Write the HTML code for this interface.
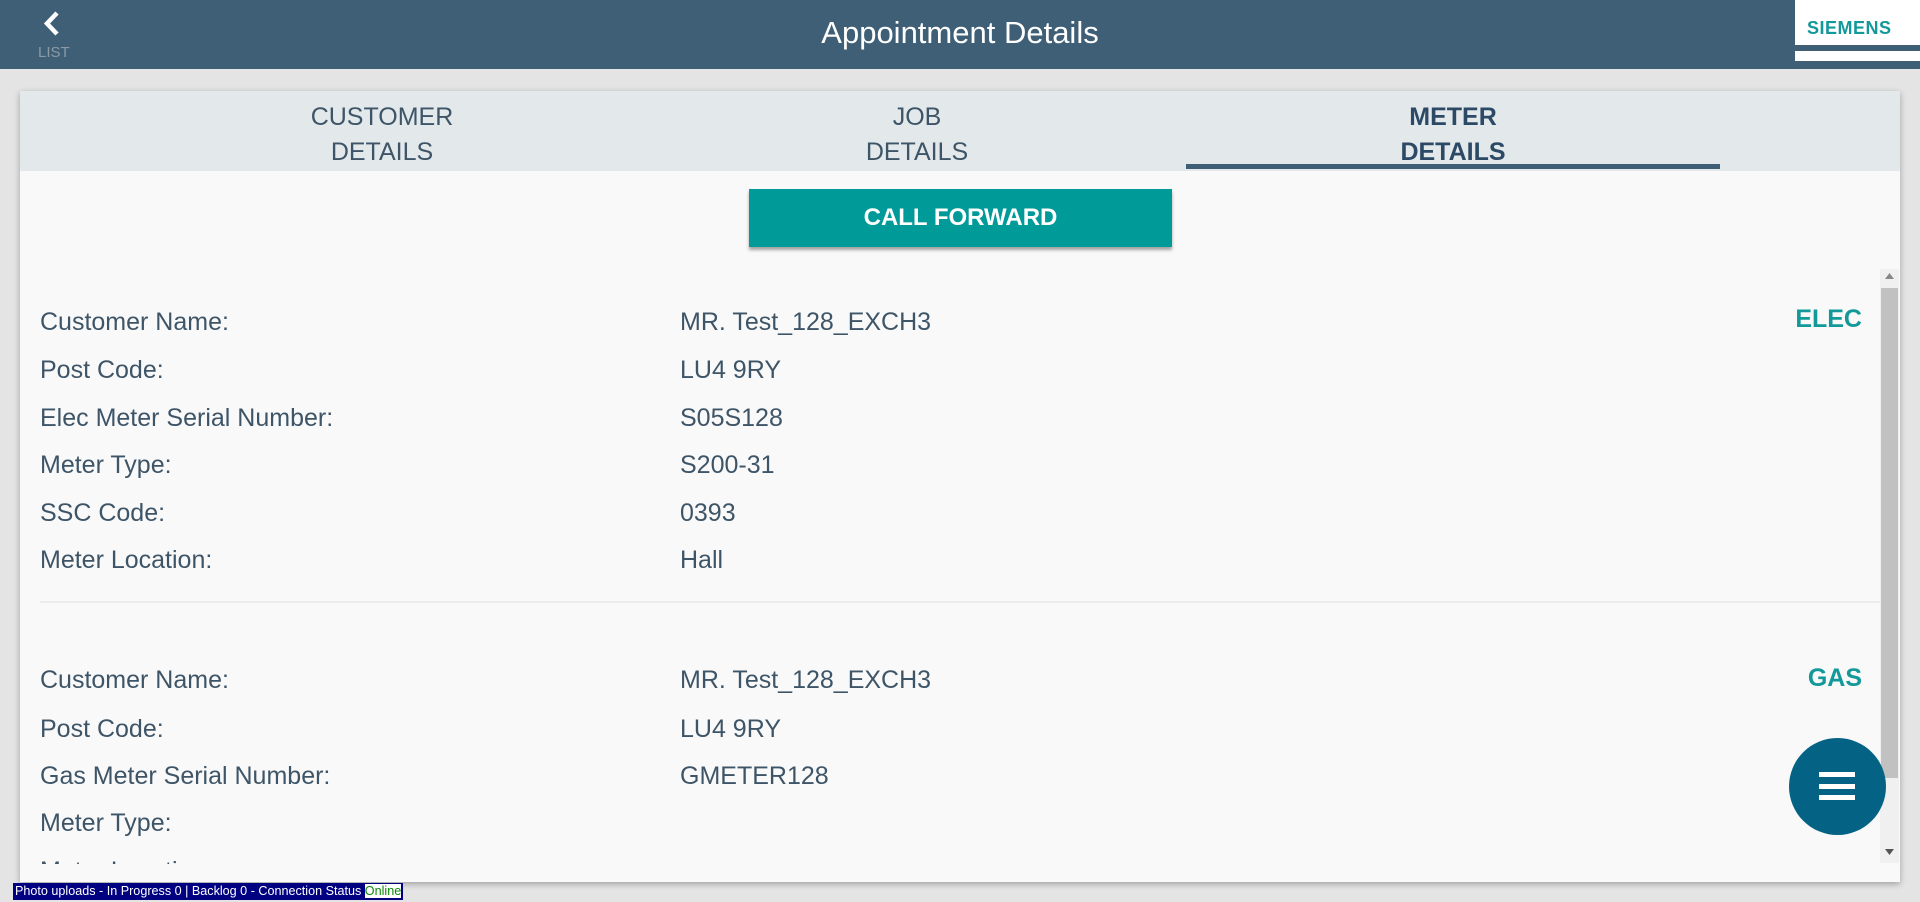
<!DOCTYPE html>
<html><head><meta charset="utf-8"><style>
*{margin:0;padding:0;box-sizing:border-box}
body{width:1920px;height:902px;overflow:hidden;background:#e4e4e4;font-family:"Liberation Sans",Arial,sans-serif;position:relative}
.hdr{position:absolute;left:0;top:0;width:1920px;height:69px;background:#3e5f76}
.title{position:absolute;left:0;width:1920px;top:15px;text-align:center;color:#fff;font-size:31px}
.list{position:absolute;left:38px;top:44px;color:#8a9aa6;font-size:15px}
.logo{position:absolute;left:1795px;top:0;width:125px;height:61px;background:#fff}
.logo span{position:absolute;left:12px;top:18px;color:#14999a;font-weight:bold;font-size:18px;letter-spacing:.5px}
.logo i{position:absolute;left:0;top:45px;width:125px;height:6px;background:#3e5f76}
.card{position:absolute;left:20px;top:91px;width:1880px;height:791px;background:#f9f9f9;box-shadow:0 2px 6px rgba(0,0,0,.3);overflow:hidden}
.tabs{position:absolute;left:0;top:0;width:1880px;height:80px;background:#e3e8eb}
.tab{position:absolute;top:9px;width:540px;text-align:center;color:#3e5568;font-size:25px;line-height:35px}
.tab.act{font-weight:bold;color:#2c4a66}
.ul{position:absolute;left:1166px;top:73px;width:534px;height:5px;background:#3e5f76}
.btn{position:absolute;left:729px;top:98px;width:423px;height:58px;background:#009a99;color:#fff;font-weight:bold;font-size:24px;text-align:center;line-height:58px;box-shadow:0 3px 3px rgba(0,0,0,.35)}
.row{position:absolute;color:#3e5568;font-size:25px;line-height:28px}
.tag{position:absolute;right:38px;color:#14999a;font-weight:bold;font-size:25px}
.div{position:absolute;left:20px;top:510px;width:1840px;height:2px;background:#ececec}
.sb{position:absolute;left:1860px;top:178px;width:19px;height:594px;background:#f0f0f0}
.th{position:absolute;left:1861px;top:197px;width:17px;height:490px;background:#c1c1c1}
.fab{position:absolute;left:1789px;top:738px;width:97px;height:97px;border-radius:50%;background:#046385}
.fab i{position:absolute;left:30px;width:36px;height:5px;background:#fff}
.status{position:absolute;left:13px;top:883px;height:17px;background:#000080;color:#fff;font-size:12.6px;line-height:17px;padding:0 2px;white-space:nowrap}
.status b{font-weight:normal;background:#fff;color:#0a8a0a}
</style></head><body>
<div class="hdr">
<svg style="position:absolute;left:40px;top:10px" width="24" height="28" viewBox="0 0 24 28"><path d="M17 3 L7 13.5 L17 24" stroke="#fff" stroke-width="4.5" fill="none"/></svg>
<div class="list">LIST</div>
<div class="title">Appointment Details</div>
<div class="logo"><span>SIEMENS</span><i></i></div>
</div>
<div class="card">
<div class="tabs">
<div class="tab" style="left:92px">CUSTOMER<br>DETAILS</div>
<div class="tab" style="left:627px">JOB<br>DETAILS</div>
<div class="tab act" style="left:1163px">METER<br>DETAILS</div>
<div class="ul"></div>
</div>
<div class="btn">CALL FORWARD</div>
<div class="tag" style="top:214px">ELEC</div>
<div class="row" style="left:20px;top:217px">Customer Name:</div><div class="row" style="left:660px;top:217px">MR. Test_128_EXCH3</div>
<div class="row" style="left:20px;top:265px">Post Code:</div><div class="row" style="left:660px;top:265px">LU4 9RY</div>
<div class="row" style="left:20px;top:313px">Elec Meter Serial Number:</div><div class="row" style="left:660px;top:313px">S05S128</div>
<div class="row" style="left:20px;top:360px">Meter Type:</div><div class="row" style="left:660px;top:360px">S200-31</div>
<div class="row" style="left:20px;top:408px">SSC Code:</div><div class="row" style="left:660px;top:408px">0393</div>
<div class="row" style="left:20px;top:455px">Meter Location:</div><div class="row" style="left:660px;top:455px">Hall</div>
<div class="div"></div>
<div class="tag" style="top:573px">GAS</div>
<div class="row" style="left:20px;top:575px">Customer Name:</div><div class="row" style="left:660px;top:575px">MR. Test_128_EXCH3</div>
<div class="row" style="left:20px;top:624px">Post Code:</div><div class="row" style="left:660px;top:624px">LU4 9RY</div>
<div class="row" style="left:20px;top:671px">Gas Meter Serial Number:</div><div class="row" style="left:660px;top:671px">GMETER128</div>
<div class="row" style="left:20px;top:718px">Meter Type:</div>
<div class="row" style="left:20px;top:766px">Meter Location:</div>
<div style="position:absolute;left:0;top:773px;width:1860px;height:20px;background:#f9f9f9"></div>
<div class="sb"></div><div class="th"></div>
<svg style="position:absolute;left:1865px;top:182px" width="9" height="6"><path d="M0 6 L4.5 0 L9 6Z" fill="#888"/></svg>
<svg style="position:absolute;left:1865px;top:758px" width="9" height="6"><path d="M0 0 L4.5 6 L9 0Z" fill="#555"/></svg>
</div>
<div class="fab"><i style="top:34px"></i><i style="top:46px"></i><i style="top:57px"></i></div>
<div class="status">Photo uploads - In Progress 0 | Backlog 0 - Connection Status <b>Online</b></div>
</body></html>
